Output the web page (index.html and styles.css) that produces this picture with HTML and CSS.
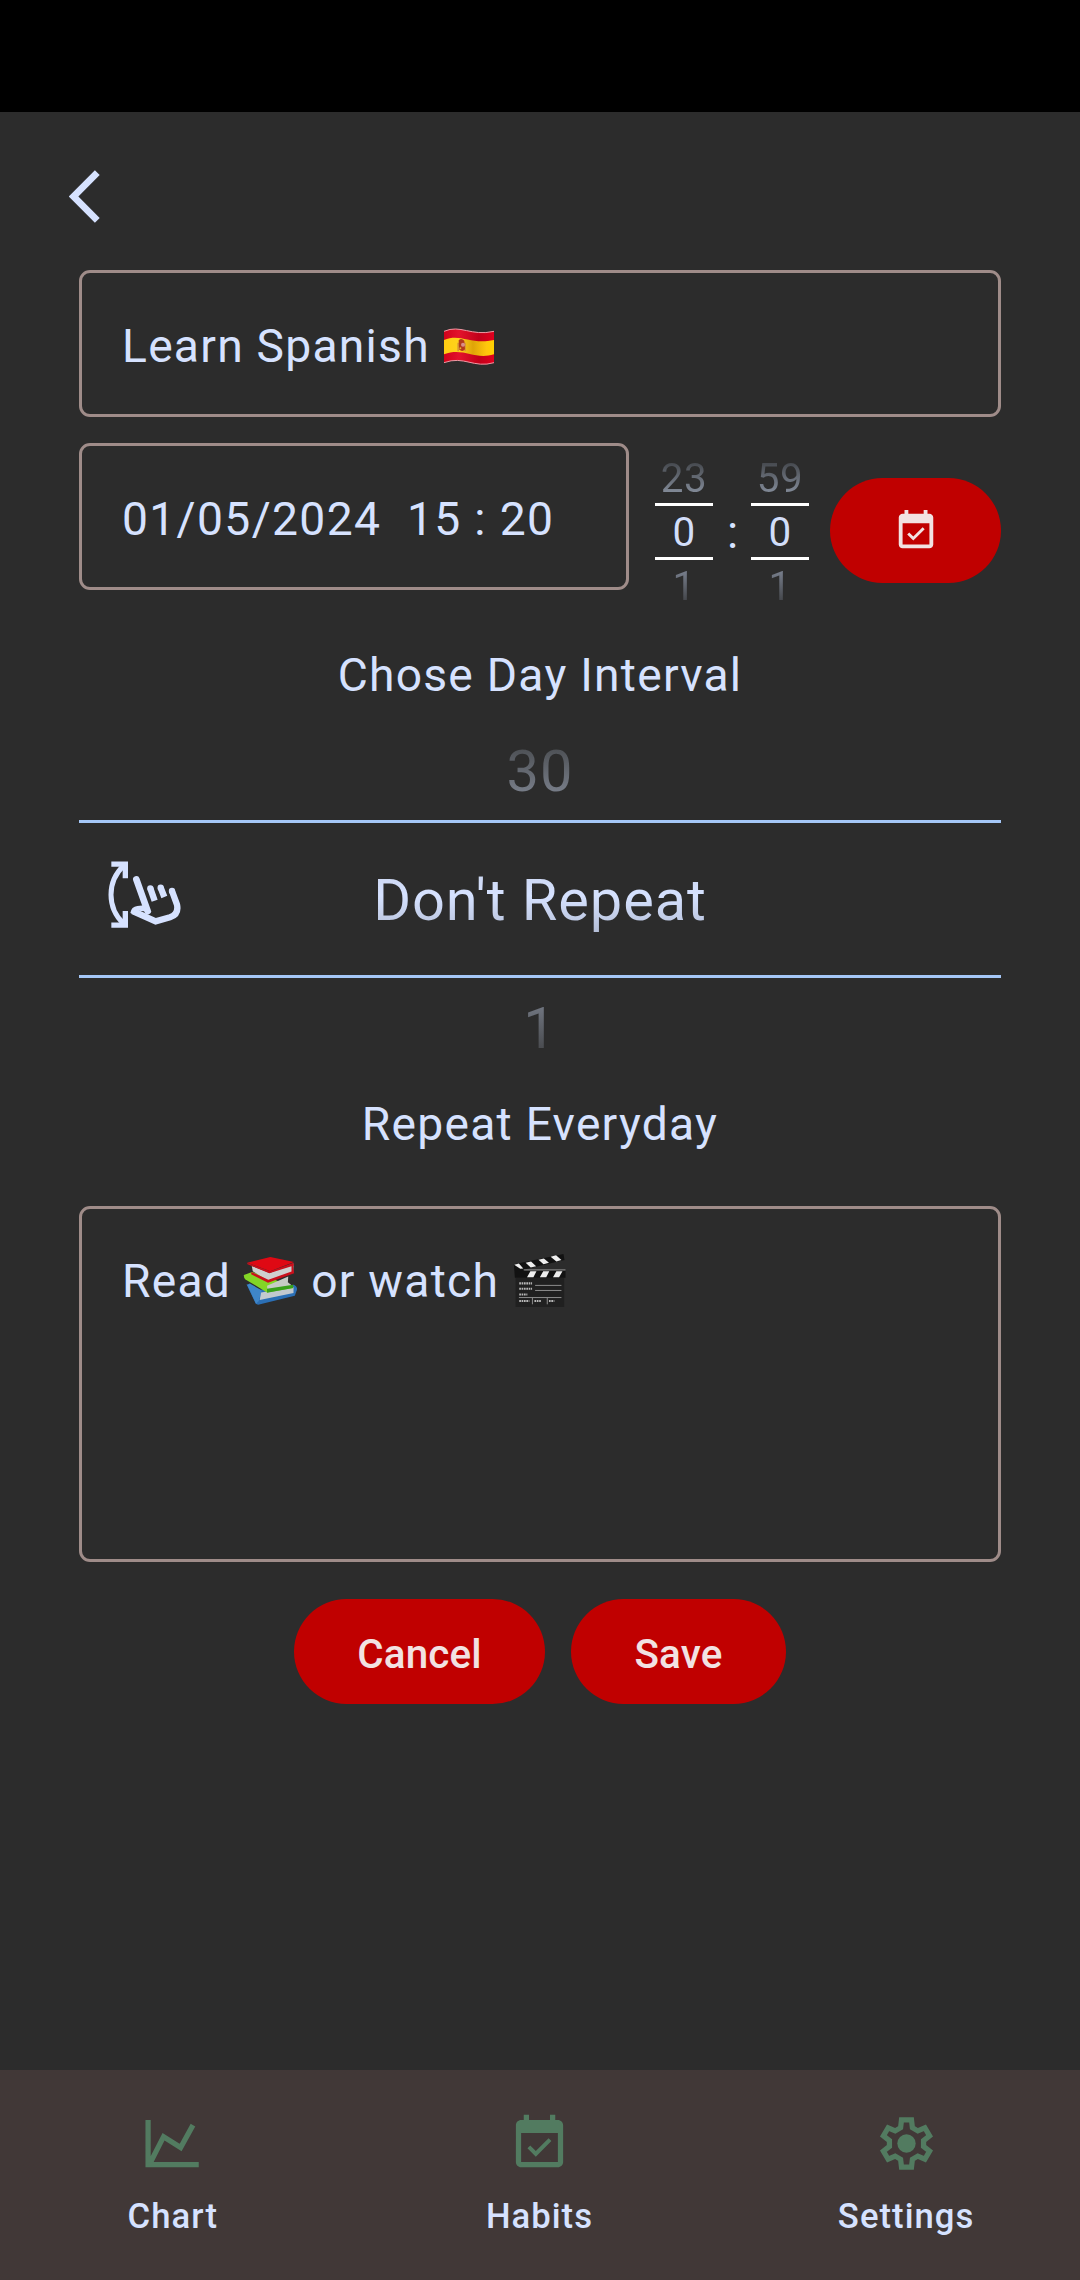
FILE: index.html
```html
<!DOCTYPE html>
<html lang="en">
<head>
<meta charset="utf-8">
<title>Edit habit</title>
<link rel="stylesheet" href="styles.css">
</head>
<body>
<div class="statusbar"></div>
<main class="screen">
  <header class="topbar">
    <svg class="back" viewBox="0 0 31 52" aria-label="Back"><path d="M28.3 2.2 4.5 26l23.8 23.8" fill="none" stroke="currentColor" stroke-width="6.8"/></svg>
  </header>

  <div class="field title-field"><span>Learn Spanish</span>
    <svg class="flag" viewBox="0 0 150 111" role="img" aria-label="Flag of Spain">
      <defs>
        <linearGradient id="red" x1="0" x2="1"><stop offset="0" stop-color="#d0021b"/><stop offset=".3" stop-color="#e3132c"/><stop offset=".7" stop-color="#c2001a"/><stop offset="1" stop-color="#e0001e"/></linearGradient>
        <linearGradient id="gold" x1="0" x2="1"><stop offset="0" stop-color="#ffce12"/><stop offset=".3" stop-color="#ffd21c"/><stop offset=".58" stop-color="#dfa408"/><stop offset=".85" stop-color="#ffc60c"/><stop offset="1" stop-color="#ffd000"/></linearGradient>
      </defs>
      <path d="M0 10C50-12 80 26 150 10V104C90 122 60 82 0 104Z" fill="url(#red)"/>
      <path d="M0 36C50 14 80 52 150 36V79C90 97 60 57 0 79Z" fill="url(#gold)"/>
      <path d="M0 10C50-12 80 26 150 10M0 104C60 82 90 122 150 104" fill="none" stroke="#ef9aa5" stroke-width="3"/>
      <path d="M40 44h5v26h-5zM61 44h5v26h-5z" fill="#d99a30"/>
      <path d="M44 37q8-8 17 1l2 26q-8 10-18 0z" fill="#b33a1c"/>
      <circle cx="57" cy="50" r="6" fill="#d98f8a"/><circle cx="49" cy="61" r="3" fill="#e8b22a"/>
    </svg>
  </div>

  <div class="when">
    <div class="field date-field">01/05/2024&nbsp; 15 : 20</div>
    <div class="time">
      <div class="wheel"><span class="above">23</span><span class="current">0</span><span class="below">1</span></div>
      <span class="colon">:</span>
      <div class="wheel"><span class="above">59</span><span class="current">0</span><span class="below">1</span></div>
    </div>
    <button class="pill pick">
      <svg viewBox="0 0 24 24" fill="currentColor"><path d="M16.53 11.06 15.47 10l-4.88 4.88-2.12-2.12-1.06 1.06L10.59 17l5.94-5.94zM19 3h-1V1h-2v2H8V1H6v2H5c-1.11 0-1.99.9-1.99 2L3 19c0 1.1.89 2 2 2h14c1.1 0 2-.9 2-2V5c0-1.1-.9-2-2-2zm0 16H5V8h14v11z"/></svg>
    </button>
  </div>

  <h2 class="label">Chose Day Interval</h2>
  <div class="interval">
    <span class="above">30</span>
    <div class="selected">
      <svg class="swipe" viewBox="84 62 219 203" aria-hidden="true">
        <g fill="none" stroke="currentColor">
          <path d="M94 71.5H136V114M94 254.5H136V212" stroke-width="16"/>
          <path d="M131 76Q93 112 93 163T131 250" stroke-width="15"/>
          <path d="M169 117 203 212" stroke-width="20" stroke-linecap="round"/>
          <path d="M276 152 291 193Q297 222 270 231L227 243 158 212" stroke-width="19"/>
          <path d="M211 144 224 181M242 142 253 170" stroke-width="19"/>
        </g>
        <path d="M151 218Q154 199 172 197L193 195 215 215 175 211 222 234 218 246Z" fill="currentColor"/>
        <circle cx="276" cy="152" r="9.5" fill="currentColor"/><circle cx="211" cy="144" r="9.5" fill="currentColor"/><circle cx="242" cy="142" r="9.5" fill="currentColor"/>
      </svg>
      <span class="value">Don't Repeat</span>
    </div>
    <span class="below">1</span>
  </div>
  <h2 class="label repeat">Repeat Everyday</h2>

  <div class="field notes"><span>Read</span>
    <svg class="books" viewBox="0 0 162 145" role="img" aria-label="Books">
      <path d="M10 82 52 99 153 84Q167 91 161 103L156 117 45 144 38 141Z" fill="#2b6fb5"/>
      <path d="M12 84 20 80 56 101 47 133 39 141Z" fill="#3f86c8"/>
      <path d="M54 107 152 91V109L50 130Z" fill="#c3c9ce"/>
      <path d="M2 54 27 45 150 88 151 94 72 107 7 68Q1 63 2 54Z" fill="#83d526"/>
      <path d="M72 87 136 59 135 76 150 88 73 98Z" fill="#c6cbc5"/>
      <path d="M72 96 151 84V94L72 108Z" fill="#38a01b"/>
      <path d="M26 27 80 48 152 20 151 45 76 72 29 43Z" fill="#cfcfcf"/>
      <path d="M12 17 82 0 154 15 82 43Z" fill="#df0914"/>
      <path d="M12 17 82 43 150 18Q156 21 151 29L154 49 75 78 24 52 25 45 76 69 146 44V28L79 49 13 22Z" fill="#c9101c"/>
    </svg>
    <span>or watch</span>
    <svg class="clapper" viewBox="0 0 154 157" role="img" aria-label="Clapper board">
      <path d="M6 70H150V157H6Z" fill="#202020"/>
      <path d="M1 30 148 0 151 18 32 46 32 50H154V70H4Z" fill="#121212"/>
      <path d="M2 32 16 28 29 43 20 44ZM36 26 52 22 67 36 51 40ZM74 17 90 13 105 26 89 30ZM110 8 126 4 142 18 127 22ZM50 51H68L59 69H40ZM88 51H106L97 69H78ZM127 51H145L135 69H117Z" fill="#eee"/>
      <path d="M30 47H154M64 93H142M64 108H142M16 129H142M56 130V149M100 130V149" stroke="#a0a0a0" stroke-width="2.5" fill="none"/>
      <path d="M17 87H55M17 103H55M17 120H41M17 139H47M62 139H82M105 139H121" stroke="#b8b8b8" stroke-width="6" stroke-dasharray="5 2" fill="none"/>
    </svg>
  </div>

  <div class="actions">
    <button class="pill">Cancel</button>
    <button class="pill">Save</button>
  </div>
</main>
<nav class="tabs">
  <a class="tab">
    <svg viewBox="0 0 24 24"><path d="M2.7 3V20H22M3.2 20 8.6 9.4 15.1 13.5 19.8 5" fill="none" stroke="currentColor" stroke-width="2"/></svg>
    <span>Chart</span>
  </a>
  <a class="tab">
    <svg viewBox="0 0 24 24" fill="currentColor"><path d="M16.53 11.06 15.47 10l-4.88 4.88-2.12-2.12-1.06 1.06L10.59 17l5.94-5.94zM19 3h-1V1h-2v2H8V1H6v2H5c-1.11 0-1.99.9-1.99 2L3 19c0 1.1.89 2 2 2h14c1.1 0 2-.9 2-2V5c0-1.1-.9-2-2-2zm0 16H5V8h14v11z"/></svg>
    <span>Habits</span>
  </a>
  <a class="tab">
    <svg viewBox="0 0 24 24"><path d="M10.1 3H13.9L14.25 6 16.3 7.2 19 6 20.8 9.1 18.5 10.9V13.1L20.8 14.9 19 18 16.3 16.8 14.25 18 13.9 21H10.1L9.75 18 7.7 16.8 5 18 3.2 14.9 5.5 13.1V10.9L3.2 9.1 5 6 7.7 7.2 9.75 6Z" fill="none" stroke="currentColor" stroke-width="2"/><circle cx="12" cy="12" r="3.5" fill="currentColor"/></svg>
    <span>Settings</span>
  </a>
</nav>
</body>
</html>
```
FILE: styles.css
```css
* { box-sizing: border-box; }
body {
  margin: 0;
  width: 1080px;
  height: 2280px;
  display: flex;
  flex-direction: column;
  background: #2c2c2c;
  color: #d6e2ff;
  font: 400 46.2px/64px Roboto, sans-serif;
  letter-spacing: 1.25px;
}
svg { display: block; flex: none; }
.statusbar { height: 112px; background: #000; }
.screen { flex: 1; padding: 0 79px; display: flex; flex-direction: column; }
.topbar { height: 158px; padding-top: 58px; }
.back { width: 31px; height: 53px; margin-left: -10px; }
.field {
  height: 147px;
  border: 3px solid #9f8c89;
  border-radius: 11px;
  padding: 0 40px;
  display: flex;
  align-items: center;
  white-space: nowrap;
}
.title-field { padding-top: 5px; }
.flag { width: 50px; height: 37px; margin-left: 14px; }
.when { margin-top: 26px; height: 159px; display: flex; align-items: flex-start; }
.date-field { width: 550px; padding-top: 5px; letter-spacing: 1.35px; }
.time {
  width: 154px;
  margin: 9px 21px 0 26px;
  display: flex;
  justify-content: space-between;
}
.wheel {
  width: 58px;
  display: grid;
  grid-template-rows: 51px 57px 51px;
  font-size: 40.4px;
  line-height: 53px;
  letter-spacing: .5px;
  text-align: center;
}
.wheel .current { border: solid #fff; border-width: 3px 0; }
.above, .below, .wheel .current, .value { color: transparent; -webkit-background-clip: text; background-clip: text; }
.wheel .above { background-image: linear-gradient(#43464b 18%, #8d96a5 90%); }
.wheel .below { background-image: linear-gradient(#858d9d 5%, #404246 85%); }
.wheel .current { color: #d2def9; }
.colon { align-self: center; line-height: 51px; letter-spacing: 0; padding: 2px 0 0 1px; }
.pill {
  height: 105px;
  border: 0;
  border-radius: 53px;
  padding: 7px 63px 0;
  background: #c00000;
  color: #f2e2e2;
  font: 500 40.4px/1 Roboto, sans-serif;
  letter-spacing: .15px;
}
.pick { width: 171px; margin-top: 35px; padding: 0; display: flex; align-items: center; justify-content: center; }
.pick svg { width: 46px; height: 46px; }
.label { margin: 41px 0 0; font: inherit; text-align: center; }
.interval {
  display: flex;
  flex-direction: column;
  margin-top: 13px;
  font-size: 57.8px;
  line-height: 80px;
  letter-spacing: .9px;
  text-align: center;
}
.interval .above { height: 100px; padding-top: 11px; background-image: linear-gradient(#4a4d51 25%, #7d838f 78%); }
.interval .below { height: 87px; padding-top: 10px; background-image: linear-gradient(#7a808c 20%, #494b4f 82%); }
.selected {
  height: 158px;
  border: solid #a5c7f7;
  border-width: 3px 0;
  display: grid;
  grid-template-columns: 135px 1fr 135px;
  align-items: center;
}
.swipe { width: 73px; height: 67.7px; margin: 0 0 8px 29px; }
.value { padding-top: 1px; background-image: linear-gradient(#c5cfe8, #d6e2ff 45%, #b5bfd8 90%); }
.repeat { margin-top: 27px; }
.notes { height: 356px; margin-top: 50px; padding-top: 40px; align-items: flex-start; }
.books { width: 54px; height: 48px; margin: 8px 14px 0 12px; }
.clapper { width: 53px; height: 53px; margin: 5px 0 0 14px; }
.actions { display: flex; justify-content: center; gap: 26px; margin-top: 37px; }
.actions .pill:first-child { width: 251px; }
.actions .pill:last-child { width: 215px; }
.tabs { height: 210px; display: grid; grid-template-columns: repeat(3, 1fr); gap: 21px; padding-right: 1px; background: #413837; }
.tab {
  display: flex;
  flex-direction: column;
  align-items: center;
  padding-top: 42px;
  gap: 20px;
  font-size: 34.65px;
  font-weight: 500;
  line-height: 42px;
  letter-spacing: 1.05px;
}
.tab svg { width: 63px; height: 63px; color: #527b60; }
```
